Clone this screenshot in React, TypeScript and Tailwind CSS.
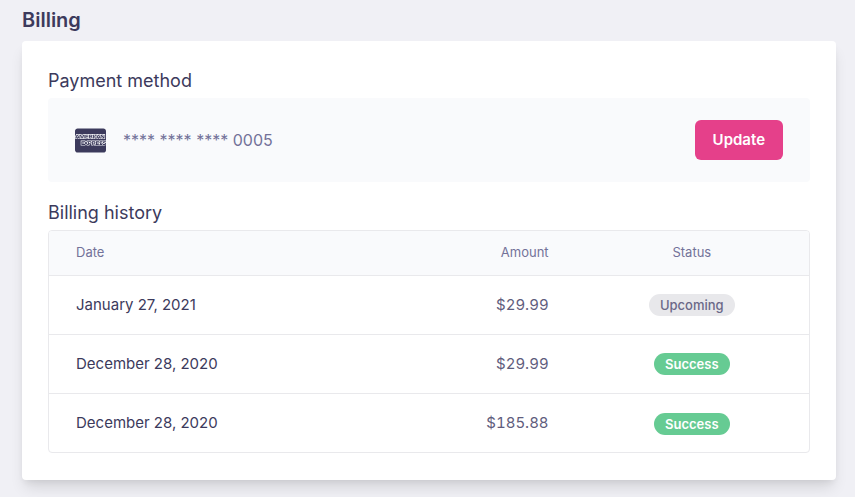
import React from "react";
import { FaCcAmex } from "react-icons/fa";

const historyData = [
    { date: "January 27, 2021", amount: "$29.99", status: "Upcoming" },
    { date: "December 28, 2020", amount: "$29.99", status: "Success" },
    { date: "December 28, 2020", amount: "$185.88", status: "Success" },
];

const badgeStyles: Record<string, string> = {
    Upcoming: "bg-[#e8e8eb] font-medium text-[#6b6888]",
    Success: "bg-[#66cb93] font-semibold text-white",
};

const PaymentMethod = () => {
    return (
        <section>
            <h2 className="text-lg leading-7">Payment method</h2>
            <div className="mt-[3px] flex items-center justify-between rounded bg-[#f9fafc] px-[27px] py-[22px]">
                <div className="flex items-center gap-[17px] text-[#737299]">
                    <FaCcAmex className="size-[31px] text-[#3c3a5c]" aria-label="American Express" />
                    <span>**** **** **** 0005</span>
                </div>
                <button type="button" className="h-10 rounded-md bg-[#e5408a] px-[18px] text-[15px] font-semibold text-white">
                    Update
                </button>
            </div>
        </section>
    );
};

const StatusBadge = ({ status }: { status: string }) => {
    return (
        <span className={`inline-block rounded-full px-[11px] text-[13px] leading-[22px] ${badgeStyles[status]}`}>
            {status}
        </span>
    );
};

const BillingHistory = () => {
    return (
        <section className="mt-[17px]">
            <h2 id="history" className="text-lg leading-7">Billing history</h2>
            <div className="mt-[3px] overflow-hidden rounded border border-[#e9e9ec]">
                <table aria-labelledby="history" className="w-full table-fixed">
                    <thead className="bg-[#f9fafc] text-[13px] text-[#737299]">
                        <tr className="h-11">
                            <th className="w-[42%] pl-[27px] text-left font-normal">Date</th>
                            <th className="pr-[2px] text-right font-normal">Amount</th>
                            <th className="w-[34%] pl-6 text-center font-normal">Status</th>
                        </tr>
                    </thead>
                    <tbody className="text-[15px]">
                        {historyData.map((row, index) => (
                            <tr key={index} className="h-[59px] border-t border-[#e9e9ec]">
                                <td className="pt-px pl-[27px]">{row.date}</td>
                                <td className="pt-px pr-[2px] text-right text-[#5f5d7d] tabular-nums">{row.amount}</td>
                                <td className="pt-[2px] pl-6 text-center">
                                    <StatusBadge status={row.status} />
                                </td>
                            </tr>
                        ))}
                    </tbody>
                </table>
            </div>
        </section>
    );
};

const App = () => {
    return (
        <main className="min-h-screen bg-[#f0f0f5] pt-[6px] pr-[19px] pb-4 pl-[22px] font-['Inter',sans-serif] text-[#3c3a5c]">
            <h1 className="text-xl leading-7 font-semibold">Billing</h1>
            <div className="mt-[7px] rounded bg-white px-[26px] pt-[26px] pb-[27px] shadow-[0_10px_15px_-3px_rgba(0,0,0,0.12),0_4px_6px_-2px_rgba(0,0,0,0.06)]">
                <PaymentMethod />
                <BillingHistory />
            </div>
        </main>
    );
};

export default App;
